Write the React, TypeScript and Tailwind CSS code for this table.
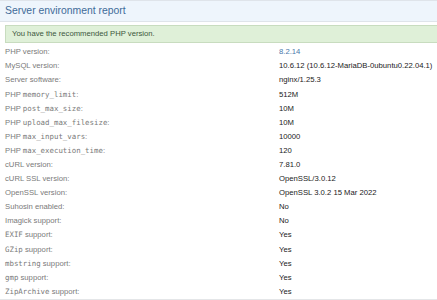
const rows: { label: React.ReactNode; value: string; link?: boolean }[] = [
  { label: "PHP version:", value: "8.2.14", link: true },
  { label: "MySQL version:", value: "10.6.12 (10.6.12-MariaDB-0ubuntu0.22.04.1)" },
  { label: "Server software:", value: "nginx/1.25.3" },
  { label: <>PHP <Code>memory_limit</Code>:</>, value: "512M" },
  { label: <>PHP <Code>post_max_size</Code>:</>, value: "10M" },
  { label: <>PHP <Code>upload_max_filesize</Code>:</>, value: "10M" },
  { label: <>PHP <Code>max_input_vars</Code>:</>, value: "10000" },
  { label: <>PHP <Code>max_execution_time</Code>:</>, value: "120" },
  { label: "cURL version:", value: "7.81.0" },
  { label: "cURL SSL version:", value: "OpenSSL/3.0.12" },
  { label: "OpenSSL version:", value: "OpenSSL 3.0.2 15 Mar 2022" },
  { label: "Suhosin enabled:", value: "No" },
  { label: "Imagick support:", value: "No" },
  { label: <><Code>EXIF</Code> support:</>, value: "Yes" },
  { label: <><Code>GZip</Code> support:</>, value: "Yes" },
  { label: <><Code>mbstring</Code> support:</>, value: "Yes" },
  { label: <><Code>gmp</Code> support:</>, value: "Yes" },
  { label: <><Code>ZipArchive</Code> support:</>, value: "Yes" },
];

function Code({ children }: { children: React.ReactNode }) {
  return <span className="font-['DejaVu_Sans_Mono',monospace] text-[7.4px]">{children}</span>;
}

export default function App() {
  return (
    <div className="h-[300px] w-[437px] overflow-hidden bg-white font-['Liberation_Sans',Arial,sans-serif]">
      <div className="h-[22px] border-y border-[#dfe4ea] bg-[#eef5fc] pl-[5px] text-[10.4px] leading-[20px] text-[#3f6b99]">
        Server environment report
      </div>

      <div className="ml-[5px] mt-[3px] h-[17.5px] border border-[#c8dcbf] border-r-0 bg-[#dff0d8] pl-[6px] text-[7.7px] leading-[15.5px] text-[#3d573c]">
        You have the recommended PHP version.
      </div>

      <div className="mt-[2.5px] border-b border-[#e4e6e8] pb-[0px]">
        {rows.map((r, i) => (
          <div key={i} className="flex h-[14.1px] items-center text-[7.7px]">
            <div className="w-[279px] shrink-0 pl-[5px] text-[#7a7a7a]">{r.label}</div>
            <div className={r.link ? "whitespace-nowrap text-[#4a78ab]" : "whitespace-nowrap text-[#222]"}>
              {r.value}
            </div>
          </div>
        ))}
      </div>
    </div>
  );
}
